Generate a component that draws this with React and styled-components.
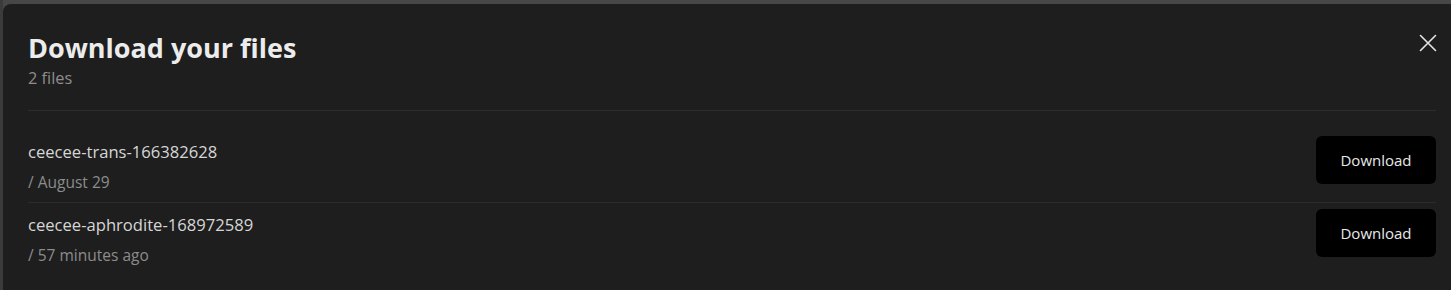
import React from "react";
import styled, { createGlobalStyle } from "styled-components";

const Global = createGlobalStyle`
  html, body {
    margin: 0;
    padding: 0;
    background: #444444;
    overflow: hidden;
  }
  body {
    font-family: "Open Sans", "Noto Sans", Arial, sans-serif;
  }
`;

const Backdrop = styled.div`
  padding: 4px 0 0 3px;
  height: 290px;
  box-sizing: border-box;
  background: linear-gradient(to right, #3b3b3b 0 3px, transparent 3px), #474747;
`;

const Modal = styled.div`
  background: #1e1e1e;
  border-radius: 8px 0 0 0;
  padding: 28px 15px 0 25px;
  height: 100%;
  box-sizing: border-box;
`;

const Header = styled.header`
  display: flex;
  justify-content: space-between;
  align-items: flex-start;
  padding-bottom: 20px;
  border-bottom: 1px solid #2d2d2d;
`;

const TitleBlock = styled.div`
  display: flex;
  flex-direction: column;
`;

const Title = styled.h2`
  margin: 0;
  font-size: 27px;
  line-height: 32px;
  font-weight: 700;
  color: #ececec;
`;

const Subtitle = styled.div`
  margin-top: 2px;
  font-size: 16.3px;
  line-height: 24px;
  color: #8d8d8d;
`;

const CloseButton = styled.button`
  margin-top: 2px;
  margin-right: -1px;
  width: 18px;
  height: 18px;
  padding: 0;
  border: 0;
  background: transparent;
  color: #e4e4e4;
  cursor: pointer;
  display: flex;
  svg {
    display: block;
  }
`;

const List = styled.ul`
  list-style: none;
  margin: 0;
  padding: 19px 0 0;
`;

const Row = styled.li`
  display: flex;
  justify-content: space-between;
  align-items: flex-start;
  padding: 6px 0 10px;
  border-bottom: ${(p) => (p.$last ? "none" : "1px solid #2b2b2b")};
`;

const FileInfo = styled.div`
  display: flex;
  flex-direction: column;
  padding-top: 4px;
`;

const FileName = styled.div`
  font-size: 16.6px;
  line-height: 24px;
  color: #d6d6d6;
`;

const FileMeta = styled.div`
  margin-top: 8px;
  font-size: 15.5px;
  line-height: 20px;
  color: #8c8c8c;
`;

const DownloadButton = styled.button`
  width: 120px;
  height: 48px;
  border: 0;
  border-radius: 6px;
  background: #000000;
  color: #e8e8e8;
  font-family: "Open Sans", "Noto Sans", Arial, sans-serif;
  font-size: 15px;
  cursor: pointer;
`;

const files = [
  { name: "ceecee-trans-166382628", meta: "/ August 29" },
  { name: "ceecee-aphrodite-168972589", meta: "/ 57 minutes ago" },
];

export default function App() {
  return (
    <>
      <Global />
      <Backdrop>
        <Modal>
          <Header>
            <TitleBlock>
              <Title>Download your files</Title>
              <Subtitle>{files.length} files</Subtitle>
            </TitleBlock>
            <CloseButton aria-label="Close">
              <svg width="18" height="18" viewBox="0 0 18 18" fill="none">
                <path d="M1.5 1.5 L16.5 16.5 M16.5 1.5 L1.5 16.5" stroke="currentColor" strokeWidth="1.6" strokeLinecap="round" />
              </svg>
            </CloseButton>
          </Header>
          <List>
            {files.map((f, i) => (
              <Row key={f.name} $last={i === files.length - 1}>
                <FileInfo>
                  <FileName>{f.name}</FileName>
                  <FileMeta>{f.meta}</FileMeta>
                </FileInfo>
                <DownloadButton>Download</DownloadButton>
              </Row>
            ))}
          </List>
        </Modal>
      </Backdrop>
    </>
  );
}
